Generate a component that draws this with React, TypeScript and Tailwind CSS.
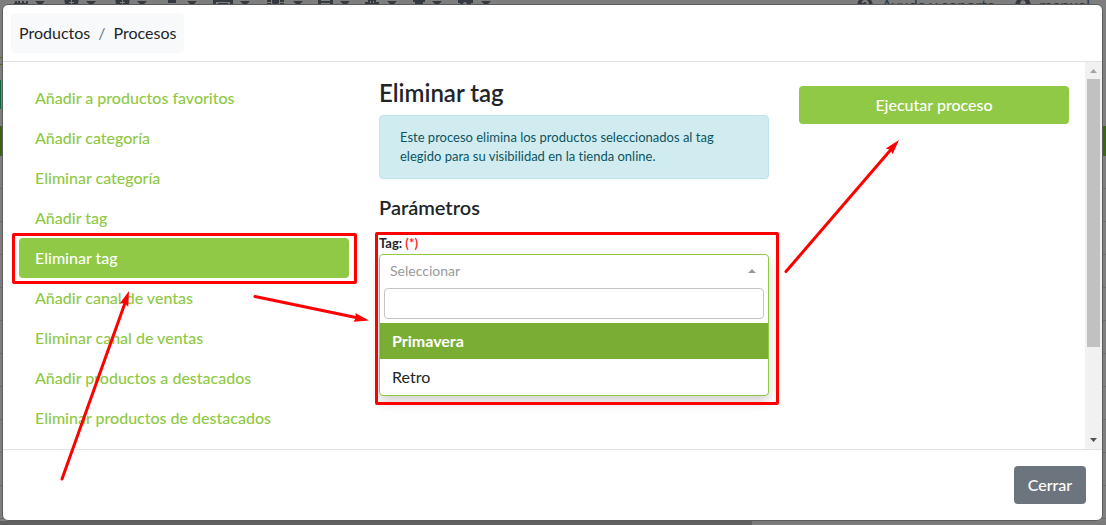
import { useState } from "react";
import { FaUserCircle, FaQuestionCircle } from "react-icons/fa";
import { cx } from "class-variance-authority";

const processes = [
  "Añadir a productos favoritos",
  "Añadir categoría",
  "Eliminar categoría",
  "Añadir tag",
  "Eliminar tag",
  "Añadir canal de ventas",
  "Eliminar canal de ventas",
  "Añadir productos a destacados",
  "Eliminar productos de destacados",
];

const tags = ["Primavera", "Retro"];

const carets = [40, 91, 142, 192, 245, 298, 345, 392, 437, 486];

function ToolbarIcons() {
  return (
    <svg width="500" height="16" viewBox="0 -5 500 16" className="fill-[#343a40]" aria-hidden="true">
      <path d="M14 -5h14v5h-14zM15 1h2v10h-2zM18 1h2v10h-2zM22 1h2v10h-2zM26 1h2v10h-2zM14 3h14v1h-14z" />
      <path d="M64 -2h15l-2 12h-11zM71 0v2h-2v1h2v2h1v-2h2v-1h-2v-2z" fillRule="evenodd" />
      <path d="M115 -2h15l-2 12h-11zM122 0v2h-2v1h2v2h1v-2h2v-1h-2v-2z" fillRule="evenodd" />
      <path d="M168 -4h8v7h-8z" />
      <path d="M213 0h20v10h-20zM216 2v6h14v-6zM218 3h10v1h-10z" fillRule="evenodd" />
      <path d="M267 0h4v2h-4zM280 0h4v2h-4zM267 3h4v5h-4zM280 3h4v5h-4zM272 -2h7v5l-2 2h-3l-2-2z" />
      <path d="M318 -3h15v13h-15zM321 0v1h9v-1zM321 3v1h9v-1z" fillRule="evenodd" />
      <path d="M368 0h8v2h3v8h-14v-8h3zM370 1v2h1v-2zM373 1v2h1v-2z" fillRule="evenodd" />
      <path d="M413 0h12v2h-2v8h-8v-8h-2z" />
      <path d="M458 -1h15v4h-2v6h-11v-6h-2zM463 4v5h4v-5a2 2 0 0 0-4 0z" fillRule="evenodd" />
      {carets.map((x) => (
        <path key={x} d={`M${x - 5} 1h10l-5 5z`} />
      ))}
    </svg>
  );
}

// Dimmed page that stays behind the dialog
function Backdrop() {
  return (
    <div className="absolute inset-0 flex flex-col overflow-hidden bg-[#7d7e7d]" aria-hidden="true">
      <div className="-mt-[5px] flex h-[62px] shrink-0 items-start justify-between pr-4 text-base leading-5 text-[#343a40]">
        <ToolbarIcons />
        <div className="flex gap-5">
          <span className="flex items-center gap-2">
            <FaQuestionCircle size={16} />
            Ayuda y soporte
          </span>
          <span className="flex items-center gap-2">
            <FaUserCircle size={16} />
            manual
          </span>
        </div>
      </div>
      <div className="h-2 w-1 shrink-0 border-y border-[#4c7015]" />
      <div className="mt-[15px] h-[29px] w-px shrink-0 bg-[#12643a]" />
      <div className="mt-[17px] h-[30px] shrink-0 bg-[#3c6318]" />
      {Array.from({ length: 11 }, (_, i) => (
        <div key={i} className="h-[33px] shrink-0 border-b border-[#6b6c6b]" />
      ))}
      <div className="mt-auto h-1 shrink-0 bg-[#7b7b7b]">
        <div className="h-full w-[68%] bg-[#606060]" />
      </div>
    </div>
  );
}

function Scrollbar() {
  return (
    <div className="flex w-[17px] shrink-0 flex-col items-center bg-[#f1f1f1]" aria-hidden="true">
      <svg width="17" height="17" viewBox="0 0 17 17">
        <path d="M5 11h7l-3.500-4z" fill="#a3a3a3" />
      </svg>
      <div className="flex w-[13px] flex-1 flex-col">
        <div className="h-[76%] bg-[#c1c1c1]" />
      </div>
      <svg width="17" height="17" viewBox="0 0 17 17">
        <path d="M5 6h7l-3.500 4z" fill="#505050" />
      </svg>
    </div>
  );
}

function Arrows() {
  return (
    <svg
      width="1106"
      height="525"
      viewBox="0 0 1106 525"
      className="pointer-events-none absolute top-0 left-0"
      aria-hidden="true"
    >
      <g stroke="#ff0000" strokeWidth="3" strokeLinecap="round">
        <path d="M62 479L125 303" />
        <path d="M255 296.500L356 317.500" />
        <path d="M786 271.500L891 149.500" />
      </g>
      <g fill="#ff0000">
        <path d="M0 0L-15 -4.500L-13 0L-15 4.500z" transform="translate(129 291) rotate(-70.400)" />
        <path d="M0 0L-15 -4.500L-13 0L-15 4.500z" transform="translate(369 320.500) rotate(12)" />
        <path d="M0 0L-15 -4.500L-13 0L-15 4.500z" transform="translate(899 140) rotate(-49.200)" />
      </g>
    </svg>
  );
}

function TagSelect() {
  const [tag, setTag] = useState("");
  const [search, setSearch] = useState("");

  return (
    <div className="relative">
      <label htmlFor="tag" className="block text-[13px] leading-5 font-bold">
        Tag: <span className="text-[#ff2a2a]">(*)</span>
      </label>
      <div className="mt-px rounded border border-[#8fc945] bg-white shadow-[0_6px_12px_rgba(0,0,0,0.18)]">
        <div className="relative">
          <select
            id="tag"
            value={tag}
            onChange={(e) => setTag(e.target.value)}
            className="block h-[29px] w-full appearance-none rounded-t bg-white px-[10px] pt-[3px] text-sm leading-5 text-[#999999] outline-none"
          >
            <option value="">Seleccionar</option>
            {tags.map((t) => (
              <option key={t}>{t}</option>
            ))}
          </select>
          <svg width="8" height="4" viewBox="0 0 8 4" className="absolute top-[14px] right-3 fill-[#999999]">
            <path d="M0 4h8l-4-4z" />
          </svg>
        </div>
        <div className="p-1">
          <input
            type="search"
            aria-label="Buscar tag"
            value={search}
            onChange={(e) => setSearch(e.target.value)}
            className="block h-[31px] w-full rounded border border-[#c4c4c4] px-2 text-sm outline-none"
          />
        </div>
        <div>
          {tags
            .filter((t) => t.toLowerCase().includes(search.toLowerCase()))
            .map((t, i) => (
              <button
                key={t}
                type="button"
                onClick={() => setTag(t)}
                className={cx(
                  "block h-9 w-full px-3 text-left text-base",
                  i === 0 ? "bg-[#7aad33] font-bold text-white" : "rounded-b text-[#212529]",
                )}
              >
                {t}
              </button>
            ))}
        </div>
      </div>
      <div className="pointer-events-none absolute -top-px -right-[10px] -bottom-[9px] -left-1 rounded-xs border-3 border-[#ff0000]" />
    </div>
  );
}

export default function App() {
  const [active, setActive] = useState("Eliminar tag");

  return (
    <div className="relative flex h-screen flex-col px-[2px] pt-1 pb-1 font-['Lato',sans-serif] text-base leading-6 text-[#212529] [font-variant-ligatures:none]">
      <Backdrop />
      <div
        role="dialog"
        aria-label="Procesos"
        className="relative mr-px flex min-h-0 flex-1 flex-col rounded-md border border-[#5c5d5c] bg-white"
      >
        <header className="flex border-b border-[#dee2e6] p-2">
          <nav className="flex h-10 items-center gap-2 rounded bg-[#f8f9fa] px-2">
            <a href="#productos">Productos</a>
            <span className="text-[#6c757d]">/</span>
            <a href="#procesos">Procesos</a>
          </nav>
        </header>

        <div className="flex min-h-0 flex-1">
          <div className="grid min-w-0 flex-1 grid-cols-[11fr_13fr_9fr] items-start gap-[30px] p-4">
            <nav className="flex flex-col">
              {processes.map((name) => (
                <a
                  key={name}
                  href="#proceso"
                  onClick={() => setActive(name)}
                  className={cx(
                    "relative rounded px-4 py-2 font-medium",
                    name === active ? "bg-[#8fc945] text-white" : "text-[#8fc945]",
                  )}
                >
                  {name}
                  {name === active && (
                    <span className="pointer-events-none absolute -top-[5px] -right-2 -bottom-[6px] -left-[7px] rounded-xs border-3 border-[#ff0000]" />
                  )}
                </a>
              ))}
            </nav>

            <section>
              <h2 className="mb-2 text-2xl leading-[29px] font-semibold">Eliminar tag</h2>
              <p className="mb-4 rounded border border-[#bee5eb] bg-[#d1ecf1] px-5 py-3 text-[13px] leading-[19px] text-[#0c5460]">
                Este proceso elimina los productos seleccionados al tag elegido para su visibilidad en la tienda
                online.
              </p>
              <h3 className="mb-[14px] text-xl leading-6 font-semibold">Parámetros</h3>
              <TagSelect />
            </section>

            <button type="button" className="mt-2 h-[38px] rounded bg-[#8fc945] font-medium text-white">
              Ejecutar proceso
            </button>
          </div>
          <Scrollbar />
        </div>

        <footer className="flex justify-end border-t border-[#dee2e6] p-4">
          <button type="button" className="h-[38px] min-w-[72px] rounded bg-[#6c757d] px-3 font-medium text-white">
            Cerrar
          </button>
        </footer>
      </div>
      <Arrows />
    </div>
  );
}
